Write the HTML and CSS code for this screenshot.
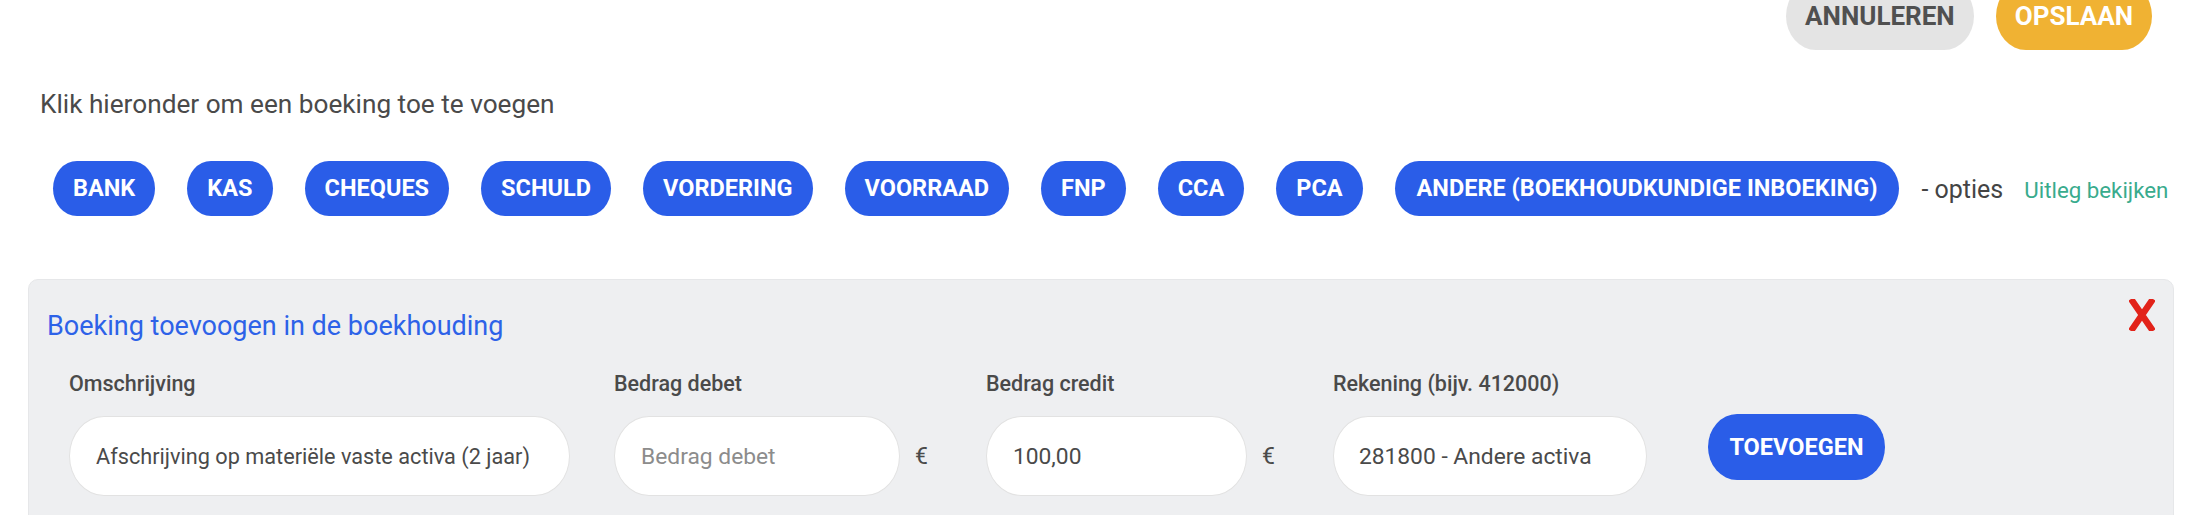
FILE: index.html
```html
<!DOCTYPE html>
<html>
<head>
<meta charset="UTF-8">
<title>Boeking toevoegen</title>
<link rel="stylesheet" href="styles.css">
</head>
<body>
<div class="page">

    <div class="actions">
        <button class="btn btn-cancel">ANNULEREN</button>
        <button class="btn btn-save">OPSLAAN</button>
    </div>

    <p class="intro">Klik hieronder om een boeking toe te voegen</p>

    <div class="types">
        <div class="chip-list">
            <button class="chip">BANK</button>
            <button class="chip">KAS</button>
            <button class="chip">CHEQUES</button>
            <button class="chip">SCHULD</button>
            <button class="chip">VORDERING</button>
            <button class="chip">VOORRAAD</button>
            <button class="chip">FNP</button>
            <button class="chip">CCA</button>
            <button class="chip">PCA</button>
            <button class="chip chip-wide">ANDERE (BOEKHOUDKUNDIGE INBOEKING)</button>
        </div>
        <span class="options">- opties</span>
        <a class="explain">Uitleg bekijken</a>
    </div>

    <div class="entry-panel">
        <div class="panel-head">
            <h3>Boeking toevoogen in de boekhouding</h3>
            <span class="close">
                <svg width="26" height="32" viewBox="0 0 26 32">
                    <path d="M2 0 L24 32 M24 0 L2 32" stroke="#e2231a" stroke-width="6.5" fill="none"/>
                </svg>
            </span>
        </div>

        <div class="entry-row">
            <div class="field field-desc">
                <label>Omschrijving</label>
                <div class="control">
                    <input type="text" value="Afschrijving op materiële vaste activa (2 jaar)">
                </div>
            </div>
            <div class="field field-debet">
                <label>Bedrag debet</label>
                <div class="control">
                    <input type="text" placeholder="Bedrag debet">
                    <span class="euro">€</span>
                </div>
            </div>
            <div class="field field-credit">
                <label>Bedrag credit</label>
                <div class="control">
                    <input type="text" value="100,00">
                    <span class="euro">€</span>
                </div>
            </div>
            <div class="field field-account">
                <label>Rekening (bijv. 412000)</label>
                <div class="control">
                    <input type="text" value="281800 - Andere activa">
                </div>
            </div>
            <button class="chip chip-add">TOEVOEGEN</button>
        </div>
    </div>

</div>
</body>
</html>
```

FILE: styles.css
```css
/* Boeking pagina */
body{
    margin: 0;
    background: #fff;
    font-family: Roboto, "Liberation Sans", Arial, sans-serif;
    color: #4a4a4a;
}
.page{
    display: flow-root;
}

/* top actions */
.actions{
    display: flex;
    justify-content: flex-end;
    gap: 22px;
    margin-top: -18px;
    padding-right: 48px;
}
.btn{
    border: none;
    font-family: inherit;
    font-size: 26px;
    font-weight: 700;
    line-height: 30px;
    padding: 19px 19px;
    border-radius: 30px / 34px;
    cursor: pointer;
}
.btn-cancel{
    background: #e4e4e4;
    color: #505050;
}
.btn-save{
    background: #f0b233;
    color: #fff;
}

.intro{
    margin: 38px 0 0;
    padding-left: 40px;
    font-size: 26.2px;
    line-height: 32px;
    color: #4a4a4a;
}

/* boeking types */
.types{
    display: flex;
    align-items: center;
    gap: 22px;
    margin-top: 41px;
    padding-left: 53px;
}
.chip-list{
    display: flex;
    gap: 32px;
}
.chip{
    border: none;
    background: #2a5de8;
    color: #fff;
    font-family: inherit;
    font-size: 23.5px;
    font-weight: 700;
    line-height: 27px;
    padding: 14px 20px;
    border-radius: 24px / 27.5px;
    white-space: nowrap;
    cursor: pointer;
}
.chip-wide{
    padding: 14px 22px;
}
.options{
    font-size: 25px;
    color: #444;
    padding-top: 2px;
}
.explain{
    font-size: 22.3px;
    color: #39ab8d;
    margin-left: -1px;
    padding-top: 2px;
    cursor: pointer;
}

/* panel */
.entry-panel{
    margin: 63px 26px 0 28px;
    padding: 22px 18px 30px 18px;
    background: #eeeff1;
    border: 1px solid #e6e7e9;
    border-radius: 10px;
}
.panel-head{
    display: flex;
    justify-content: space-between;
    align-items: flex-start;
}
.panel-head h3{
    margin: 8px 0 0;
    font-size: 27px;
    font-weight: 400;
    line-height: 32px;
    color: #2d62e8;
}
.close{
    display: block;
    width: 26px;
    height: 32px;
    margin-top: -3px;
}
.close svg{
    display: block;
}

.entry-row{
    display: flex;
    align-items: flex-end;
    gap: 44px;
    margin-top: 28px;
    padding-left: 22px;
}
.field{
    display: flex;
    flex-direction: column;
}
.field label{
    font-size: 21.5px;
    font-weight: 500;
    line-height: 28px;
    margin-bottom: 18px;
    color: #4a4a4a;
}
.control{
    display: flex;
    align-items: center;
}
.control input{
    box-sizing: border-box;
    height: 80px;
    padding: 0 20px 0 26px;
    border: 1px solid #e2e2e2;
    border-radius: 35px / 40px;
    background: #fff;
    font-family: inherit;
    font-size: 22.8px;
    color: #4a4a4a;
    outline: none;
}
.control input::placeholder{
    color: #8c8c8c;
}
.field-desc input{ width: 501px; font-size: 21.7px; }
.field-debet input{ width: 286px; }
.field-credit input{ width: 261px; }
.field-account input{ width: 314px; padding-left: 25px; }
.euro{
    margin: 0 14px 0 15px;
    font-size: 23px;
    color: #4a4a4a;
}

.chip-add{
    padding: 19.5px 21.5px;
    border-radius: 29px / 33px;
    margin-left: 17px;
    margin-bottom: 16px;
}
```
